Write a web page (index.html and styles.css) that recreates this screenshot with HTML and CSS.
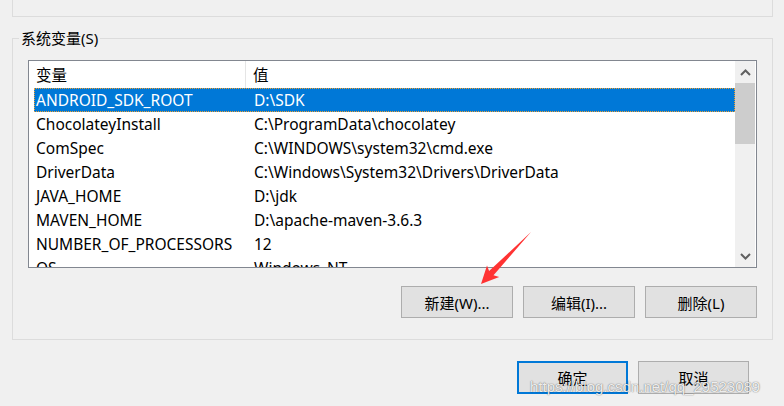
FILE: index.html
```html
<!DOCTYPE html>
<html lang="zh-CN">
<head>
    <meta charset="UTF-8">
    <title>环境变量</title>
    <link rel="stylesheet" href="styles.css">
</head>
<body>
    <div class="window">
        <!-- 上方用户变量分组的底边 -->
        <div class="prev-group"></div>

        <!-- 系统变量 -->
        <fieldset class="group">
            <legend>系统变量(S)</legend>
            <div class="list">
                <div class="list-body">
                    <div class="list-head">
                        <span class="col-name">变量</span>
                        <span class="col-value">值</span>
                    </div>
                    <div class="row selected"><span class="col-name">ANDROID_SDK_ROOT</span><span class="col-value">D:\SDK</span></div>
                    <div class="row"><span class="col-name">ChocolateyInstall</span><span class="col-value">C:\ProgramData\chocolatey</span></div>
                    <div class="row"><span class="col-name">ComSpec</span><span class="col-value">C:\WINDOWS\system32\cmd.exe</span></div>
                    <div class="row"><span class="col-name">DriverData</span><span class="col-value">C:\Windows\System32\Drivers\DriverData</span></div>
                    <div class="row"><span class="col-name">JAVA_HOME</span><span class="col-value">D:\jdk</span></div>
                    <div class="row"><span class="col-name">MAVEN_HOME</span><span class="col-value">D:\apache-maven-3.6.3</span></div>
                    <div class="row"><span class="col-name">NUMBER_OF_PROCESSORS</span><span class="col-value">12</span></div>
                    <div class="row"><span class="col-name">OS</span><span class="col-value">Windows_NT</span></div>
                </div>
                <div class="scrollbar">
                    <div class="sb-btn">
                        <svg width="11" height="7" viewBox="0 0 11 7"><path d="M1 6 L5.5 1.5 L10 6" fill="none" stroke="#606060" stroke-width="2"/></svg>
                    </div>
                    <div class="sb-track"><div class="sb-thumb"></div></div>
                    <div class="sb-btn">
                        <svg width="11" height="7" viewBox="0 0 11 7"><path d="M1 1 L5.5 5.5 L10 1" fill="none" stroke="#606060" stroke-width="2"/></svg>
                    </div>
                </div>
            </div>
            <div class="group-actions">
                <button>新建(W)...</button>
                <button>编辑(I)...</button>
                <button>删除(L)</button>
            </div>
        </fieldset>

        <div class="dialog-actions">
            <button class="default">确定</button>
            <button>取消</button>
        </div>

        <!-- 截图标注 -->
        <svg class="arrow" width="784" height="406" viewBox="0 0 784 406">
            <polygon points="531,232 493.5,275.3 499.2,277 481,284 487,265.5 489.1,271.1" fill="#f33"/>
        </svg>
        <div class="watermark">https://blog.csdn.net/qq_29523089</div>
    </div>
</body>
</html>
```

FILE: styles.css
```css
body {
    margin: 0;
    background: #f0f0f0;
    font-family: 'Noto Sans', 'Noto Sans CJK SC', sans-serif;
    font-size: 15px;
    color: #000;
}

.window {
    position: relative;
    width: 784px;
    height: 406px;
    overflow: hidden;
}

.prev-group {
    margin-left: 12px;
    width: 761px;
    height: 17px;
    box-sizing: border-box;
    border: 1px solid #dcdcdc;
    border-top: none;
}

.group {
    margin: 11px 0 0 12px;
    width: 761px;
    box-sizing: border-box;
    border: 1px solid #dcdcdc;
    padding: 12px 15px 21px;
    min-width: 0;
}

.group legend {
    padding: 0 2px;
    margin-left: -9px;
    line-height: 20px;
}

.list {
    display: flex;
    height: 208px;
    box-sizing: border-box;
    border: 1px solid #828790;
    background: #fff;
    font-size: 15.5px;
}

.list-body {
    flex: 1;
    overflow: hidden;
    padding-left: 5px;
}

.list-head, .row {
    display: flex;
    white-space: nowrap;
}

.list-head {
    height: 27px;
    align-items: center;
}

.list-head .col-name {
    width: 212px;
    padding-left: 2px;
    box-sizing: border-box;
    border-right: 1px solid #e5e5e5;
    align-self: stretch;
    display: flex;
    align-items: center;
}

.list-head .col-value { padding-left: 7px; }

.row {
    height: 24px;
    box-sizing: border-box;
    border: 1px solid transparent;
    align-items: center;
}

.row .col-name {
    width: 212px;
    padding-left: 1px;
    box-sizing: border-box;
}

.row .col-value { padding-left: 7px; }

.row.selected {
    background: #0078d7;
    color: #fff;
    border: 1px dotted #f0a030;
}

.scrollbar {
    width: 20px;
    margin-right: 1px;
    display: flex;
    flex-direction: column;
    background: #f0f0f0;
}

.sb-btn {
    height: 22px;
    display: flex;
    align-items: center;
    justify-content: center;
}

.sb-track { flex: 1; }

.sb-thumb {
    height: 61px;
    background: #cdcdcd;
}

button {
    font-family: 'Noto Sans', 'Noto Sans CJK SC', sans-serif;
    font-size: 15px;
    color: #000;
    background: #e1e1e1;
    border: 1px solid #adadad;
    padding: 0;
}

.group-actions {
    display: flex;
    justify-content: flex-end;
    gap: 10px;
    margin-top: 18px;
}

.group-actions button {
    width: 112px;
    height: 32px;
}

.dialog-actions {
    display: flex;
    justify-content: flex-end;
    gap: 10px;
    margin: 21px 35px 0 0;
}

.dialog-actions button {
    width: 111px;
    height: 33px;
}

.dialog-actions .default {
    border: 2px solid #0078d7;
}

.arrow {
    position: absolute;
    left: 0;
    top: 0;
    pointer-events: none;
}

.watermark {
    position: absolute;
    left: 530px;
    top: 378px;
    font-family: 'Liberation Sans', Arial, sans-serif;
    font-size: 15px;
    line-height: 18px;
    color: rgba(255, 255, 255, 0.9);
    text-shadow: 0 0 1px rgba(0, 0, 0, 0.55), 0 0 2px rgba(0, 0, 0, 0.2);
    white-space: nowrap;
}
```
